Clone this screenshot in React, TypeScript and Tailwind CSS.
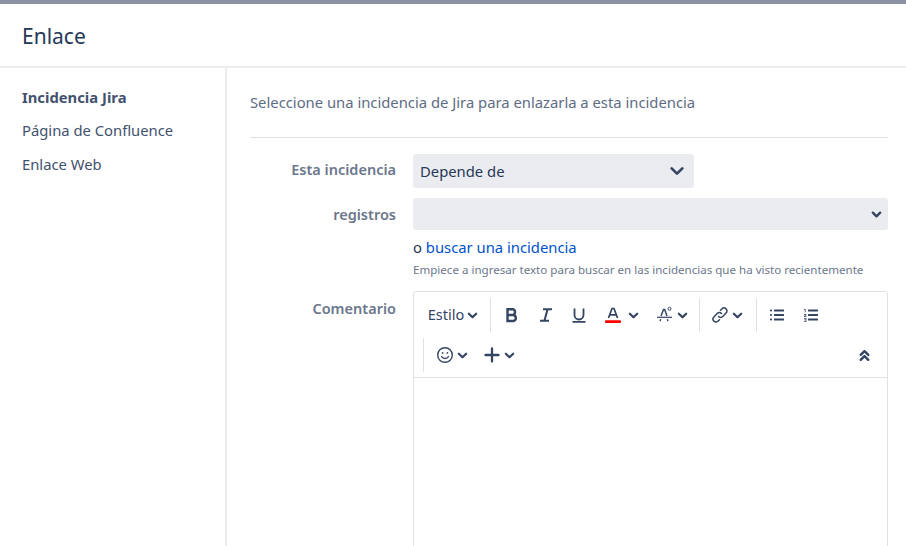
const font = "font-['Noto_Sans','Open_Sans',sans-serif]";

function Chevron({ className = "h-3 w-3", width = 3 }: { className?: string; width?: number }) {
  return (
    <svg viewBox="0 0 12 12" className={className} fill="none" stroke="#344563" strokeWidth={width}>
      <path d="M2 4l4 4 4-4" strokeLinecap="round" strokeLinejoin="round" />
    </svg>
  );
}

function Sep() {
  return <div className="mx-[6px] h-[34px] w-px bg-[#dfe1e6]" />;
}

function Tool({ children, className = "" }: { children: React.ReactNode; className?: string }) {
  return <div className={`flex h-8 items-center justify-center ${className}`}>{children}</div>;
}

function Toolbar() {
  const ink = "#344563";
  return (
    <div className="border-b border-[#dfe1e6] pb-[5px] pl-[6px] pr-[8px] pt-[6px]">
      <div className="flex h-[34px] items-center">
        <Tool className="w-[64px] gap-[3px] pl-[2px]">
          <span className="text-[14.5px] text-[#344563]">Estilo</span>
          <Chevron className="h-[11px] w-[11px]" width={2.4} />
        </Tool>
        <Sep />
        <Tool className="w-[30px]">
          <svg viewBox="0 0 16 16" className="h-4 w-4" fill="none" stroke={ink} strokeWidth="2.4">
            <path d="M3.5 2.2h5.3a3 3 0 0 1 0 5.8H3.5zM3.5 8h6a3.1 3.1 0 0 1 0 6H3.5zM3.5 1v14" />
          </svg>
        </Tool>
        <Tool className="ml-[4px] w-[30px]">
          <svg viewBox="0 0 16 16" className="h-4 w-4" fill="none" stroke={ink} strokeWidth="2">
            <path d="M5 2.2h9M2 13.8h9M9.6 2.2 6.4 13.8" />
          </svg>
        </Tool>
        <Tool className="ml-[3px] w-[30px]">
          <svg viewBox="0 0 16 16" className="h-4 w-4" fill="none" stroke={ink} strokeWidth="1.8">
            <path d="M3.5 1.5v6.5a4.5 4.5 0 0 0 9 0V1.500M1.500 14.800h13" />
          </svg>
        </Tool>
        <Tool className="ml-[1px] w-[50px] gap-[6px] pl-[2px]">
          <svg viewBox="0 0 18 18" className="h-[18px] w-[18px]">
            <path d="M4.500 12 8 2.500h2L13.500 12M5.800 8.800h6.400" fill="none" stroke={ink} strokeWidth="1.700" />
            <rect x="1" y="14.300" width="16" height="2.700" rx="1" fill="#ff0000" />
          </svg>
          <Chevron className="h-[11px] w-[11px]" width={2.4} />
        </Tool>
        <Tool className="ml-[5px] w-[43px] gap-[3px]">
          <svg viewBox="0 0 18 18" className="h-[18px] w-[18px]" fill="none" stroke={ink}>
            <path d="M5 10 7.500 3.500h1.200L11 10" strokeWidth="1.500" />
            <path d="M1 11.300h15" strokeWidth="1.200" />
            <path d="M4 15l.7-1.700M11.300 13.300 12 15" strokeWidth="1.500" />
            <circle cx="13.500" cy="2.800" r="1.500" strokeWidth="1" />
          </svg>
          <Chevron className="h-[11px] w-[11px]" width={2.4} />
        </Tool>
        <Sep />
        <Tool className="w-[44px] gap-[3px] pr-[3px]">
          <svg viewBox="0 0 18 18" className="h-[18px] w-[18px]" fill="none" stroke={ink} strokeWidth="1.500">
            <path d="M7.500 10.500a3 3 0 0 0 4.300 0l3.300-3.400a3 3 0 0 0-4.300-4.200L9.500 4.200" strokeLinecap="round" />
            <path d="M10.500 7.500a3 3 0 0 0-4.300 0l-3.300 3.400a3 3 0 0 0 4.300 4.200l1.300-1.300" strokeLinecap="round" />
          </svg>
          <Chevron className="h-[11px] w-[11px]" width={2.4} />
        </Tool>
        <Sep />
        <Tool className="w-[28px]">
          <svg viewBox="0 0 16 16" className="h-4 w-4" fill={ink}>
            <rect x="5" y="2.500" width="10" height="1.900" rx=".5" />
            <rect x="5" y="7" width="10" height="1.900" rx=".5" />
            <rect x="5" y="11.500" width="10" height="1.900" rx=".5" />
            <circle cx="2" cy="3.500" r="1.100" />
            <circle cx="2" cy="8" r="1.100" />
            <circle cx="2" cy="12.500" r="1.100" />
          </svg>
        </Tool>
        <Tool className="ml-[6px] w-[28px]">
          <svg viewBox="0 0 16 16" className="h-4 w-4" fill={ink}>
            <rect x="5" y="2.500" width="10" height="1.900" rx=".5" />
            <rect x="5" y="7" width="10" height="1.900" rx=".5" />
            <rect x="5" y="11.500" width="10" height="1.900" rx=".5" />
            <path d="M1 2h1.600v3.200H1.800V2.800H1zM1 7h2.400v.7L2 9.200h1.500v.7H1v-.7l1.400-1.500H1zM1 11h2.400v3.800H1v-.7h1.700v-.9H1.400v-.6h1.300v-.9H1z" />
          </svg>
        </Tool>
      </div>
      <div className="mt-[6px] flex h-[34px] items-center">
        <div className="ml-[3px] mr-[6px] h-[34px] w-px bg-[#dfe1e6]" />
        <Tool className="w-[38px] gap-[3px] pl-[5px]">
          <svg viewBox="0 0 18 18" className="h-[18px] w-[18px]" fill="none" stroke={ink} strokeWidth="1.400">
            <circle cx="9" cy="9" r="7.300" />
            <path d="M5.500 10.500a4 4 0 0 0 7 0" strokeLinecap="round" />
            <circle cx="6.600" cy="6.900" r=".9" fill={ink} stroke="none" />
            <circle cx="11.400" cy="6.900" r=".9" fill={ink} stroke="none" />
          </svg>
          <Chevron className="h-[11px] w-[11px]" width={2.4} />
        </Tool>
        <Tool className="ml-[15px] w-[32px] gap-[4px]">
          <svg viewBox="0 0 16 16" className="h-4 w-4" fill="none" stroke={ink} strokeWidth="2.300">
            <path d="M8 1.500v13M1.500 8h13" strokeLinecap="round" />
          </svg>
          <Chevron className="h-[11px] w-[11px]" width={2.4} />
        </Tool>
        <div className="ml-auto flex h-8 w-[30px] items-center justify-center">
          <svg viewBox="0 0 12 12" className="h-[13px] w-[13px]" fill="none" stroke={ink} strokeWidth="2.200">
            <path d="M2.500 5.500 6 2l3.500 3.500M2.500 10 6 6.500 9.500 10" strokeLinecap="round" strokeLinejoin="round" />
          </svg>
        </div>
      </div>
    </div>
  );
}

export default function App() {
  return (
    <div className={`${font} h-[546px] w-[906px] overflow-hidden bg-white text-[#42526e]`}>
      <div className="h-[4px] bg-[#8993a4]" />
      <header className="flex h-[64px] items-center border-b-2 border-[#ebecf0] pl-[22px] pt-[3px]">
        <h1 className="text-[21px] font-normal text-[#253858]">Enlace</h1>
      </header>
      <div className="flex h-[478px]">
        <nav className="w-[227px] shrink-0 border-r-2 border-[#ebecf0] pl-[22px] pt-[12px] text-[14.800px]">
          <div className="flex h-[33.500px] items-center font-bold text-[#42526e]">Incidencia Jira</div>
          <div className="flex h-[33.500px] items-center">Página de Confluence</div>
          <div className="flex h-[33.500px] items-center">Enlace Web</div>
        </nav>
        <main className="w-[661px] pl-[23px]">
          <p className="flex h-[70px] items-center border-b border-[#dfe1e6] pb-[1px] text-[14.800px] text-[#5e6c84]">
            Seleccione una incidencia de Jira para enlazarla a esta incidencia
          </p>
          <div className="mt-[16px] flex">
            <label className="w-[147px] pr-[1px] pt-[5px] text-right text-[14.500px] font-semibold leading-5 text-[#6b778c]">
              Esta incidencia
            </label>
            <div className="ml-[16px] flex h-[34px] w-[281px] items-center justify-between rounded-[3px] bg-[#ebecf0] pl-[7px] pr-[9px]">
              <span className="text-[14.800px] text-[#253858]">Depende de</span>
              <Chevron className="h-4 w-4" width={2} />
            </div>
          </div>
          <div className="mt-[10px] flex">
            <label className="w-[147px] pr-[1px] pt-[6px] text-right text-[14.500px] font-semibold leading-5 text-[#6b778c]">
              registros
            </label>
            <div className="ml-[16px] w-[475px]">
              <div className="flex h-[32px] items-center justify-end rounded-[3px] bg-[#ebecf0] pr-[6px]">
                <Chevron className="h-[11px] w-[11px]" width={2.600} />
              </div>
              <p className="mt-[7px] text-[14.800px] leading-5 text-[#253858]">
                o <a className="text-[#0052cc]">buscar una incidencia</a>
              </p>
              <p className="mt-[5px] whitespace-nowrap text-[11.570px] leading-4 text-[#6b778c]">
                Empiece a ingresar texto para buscar en las incidencias que ha visto recientemente
              </p>
            </div>
          </div>
          <div className="mt-[13px] flex">
            <label className="w-[147px] pr-[1px] pt-[7px] text-right text-[14.500px] font-semibold leading-5 text-[#6b778c]">
              Comentario
            </label>
            <div className="ml-[16px] h-[300px] w-[475px] rounded-t-[3px] border border-[#dfe1e6]">
              <Toolbar />
            </div>
          </div>
        </main>
      </div>
    </div>
  );
}
